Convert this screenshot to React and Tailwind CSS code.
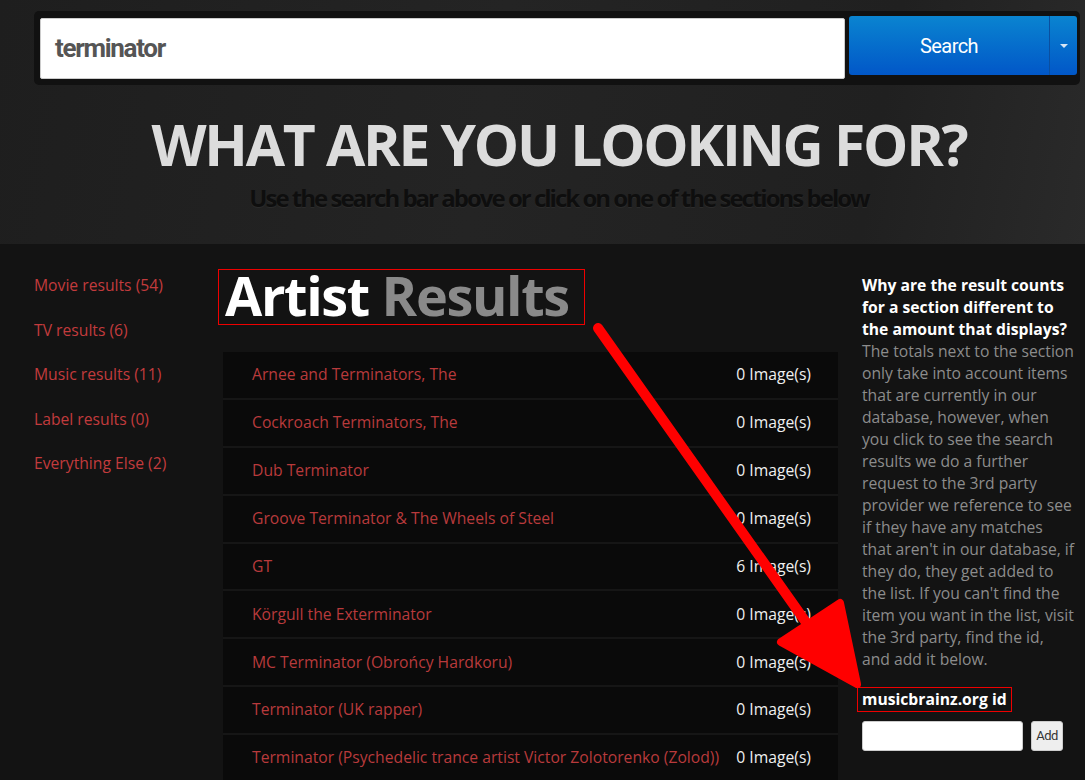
import React from "react";

const rows = [
  ["Arnee and Terminators, The", "0"],
  ["Cockroach Terminators, The", "0"],
  ["Dub Terminator", "0"],
  ["Groove Terminator & The Wheels of Steel", "0"],
  ["GT", "6"],
  ["Körgull the Exterminator", "0"],
  ["MC Terminator (Obrońcy Hardkoru)", "0"],
  ["Terminator (UK rapper)", "0"],
  ["Terminator (Psychedelic trance artist Victor Zolotorenko (Zolod))", "0"],
];

const links = [
  "Movie results (54)",
  "TV results (6)",
  "Music results (11)",
  "Label results (0)",
  "Everything Else (2)",
];

export default function App() {
  return (
    <div
      className="relative w-[1085px] h-[780px] overflow-hidden bg-[#131313]"
      style={{ fontFamily: '"Open Sans", "Liberation Sans", sans-serif' }}
    >
      {/* Header */}
      <div className="h-[244px] bg-[linear-gradient(100deg,#1e1e1e_0%,#242424_45%,#202020_80%,#2a2a2a_100%)] pt-[11px]">
        <div className="ml-[34px] w-[1046px] h-[74px] rounded-[5px] bg-[#111] flex items-start pl-[6px] pt-[5px] gap-[4px]">
          <div className="mt-[2px] w-[805px] h-[61px] bg-white rounded-[2px] border border-[#ccc] flex items-center pl-[14px]">
            <span
              className="text-[26px] font-bold text-[#555] tracking-[-0.05em]"
              style={{ fontFamily: 'Roboto, "Liberation Sans", sans-serif' }}
            >
              terminator
            </span>
          </div>
          <div className="w-[228px] h-[59px] rounded-[3px] bg-[linear-gradient(#0a84d0,#0157c8)] flex">
            <div
              className="flex-1 flex items-center justify-center text-white text-[20px] tracking-[-0.03em]"
              style={{ fontFamily: 'Roboto, "Liberation Sans", sans-serif' }}
            >
              Search
            </div>
            <div className="w-[28px] border-l border-[#0a4fa0] flex items-center justify-center">
              <div className="w-0 h-0 border-l-[4px] border-r-[4px] border-t-[4px] border-l-transparent border-r-transparent border-t-[#d8e6f5]" />
            </div>
          </div>
        </div>
        <div className="pl-[33px]">
          <h1 className="mt-[29px] text-center text-[57px] leading-[60px] font-bold text-[#dcdcdc] tracking-[-0.04em]">
            WHAT ARE YOU LOOKING FOR?
          </h1>
          <p className="mt-[9px] text-center text-[24px] leading-[30px] font-bold text-[#0e0e0e] tracking-[-0.083em] [text-shadow:0_1px_0_#2c2c2c]">
            Use the search bar above or click on one of the sections below
          </p>
        </div>
      </div>

      {/* Main */}
      <div className="flex">
        {/* Left nav */}
        <div className="w-[223px] pl-[34px] pt-[30px] flex flex-col gap-[22px]">
          {links.map((l) => (
            <div key={l} className="text-[15.7px] leading-[22.5px] text-[#c23b3d]">
              {l}
            </div>
          ))}
        </div>

        {/* Center */}
        <div className="w-[615px] pt-[25px]">
          <div className="ml-[-5px] inline-block border border-[#e00] pl-[6px] pr-[15px] h-[56px]">
            <div className="mt-[-3px] text-[54px] leading-[56px] font-bold tracking-[-0.025em]">
              <span className="text-white">Artist</span>{" "}
              <span className="text-[#8a8a8a]">Results</span>
            </div>
          </div>
          <div className="mt-[27px] flex flex-col gap-[2px] bg-[#161616]">
            {rows.map(([name, n]) => (
              <div
                key={name}
                className="h-[45.9px] bg-[#0a0a0a] flex items-center justify-between pl-[29px] pr-[27px] text-[15.7px]"
              >
                <span className="text-[#b83a3c]">{name}</span>
                <span className="text-[#f0f0f0]">{n} Image(s)</span>
              </div>
            ))}
          </div>
        </div>

        {/* Right */}
        <div className="pl-[24px] pt-[30px] w-[247px]">
          <div className="w-[213px] text-[15.7px] leading-[22px]">
            <div className="font-bold text-white">
              Why are the result counts for a section different to the amount that displays?
            </div>
            <div className="text-[#8c8c8c]">
              The totals next to the section only take into account items that are currently in our database, however, when you click to see the search results we do a further request to the 3rd party provider we reference to see if they have any matches that aren't in our database, if they do, they get added to the list. If you can't find the item you want in the list, visit the 3rd party, find the id, and add it below.
            </div>
          </div>
          <div className="mt-[17px] ml-[-5px] inline-block border border-[#e00] px-[4px] h-[25px] text-[15.7px] leading-[22px] font-bold text-white">
            musicbrainz.org id
          </div>
          <div className="mt-[9px] flex gap-[8px]">
            <div className="w-[161px] h-[30px] bg-white rounded-[3px] border border-[#ccc]" />
            <div
              className="w-[32px] h-[30px] bg-[#eee] rounded-[3px] border border-[#ccc] flex items-center justify-center text-[13px] text-[#333] tracking-[-0.04em]"
              style={{ fontFamily: 'Roboto, "Liberation Sans", sans-serif' }}
            >
              Add
            </div>
          </div>
        </div>
      </div>

      {/* Annotation arrow */}
      <svg
        className="absolute left-0 top-0 pointer-events-none"
        width="1085"
        height="780"
        viewBox="0 0 1085 780"
      >
        <line x1="598" y1="328" x2="815" y2="635" stroke="#ff0000" strokeWidth="10" strokeLinecap="round" />
        <polygon
          points="781,642 840,603 857,684"
          fill="#ff0000"
          stroke="#ff0000"
          strokeWidth="8"
          strokeLinejoin="round"
        />
      </svg>
    </div>
  );
}
